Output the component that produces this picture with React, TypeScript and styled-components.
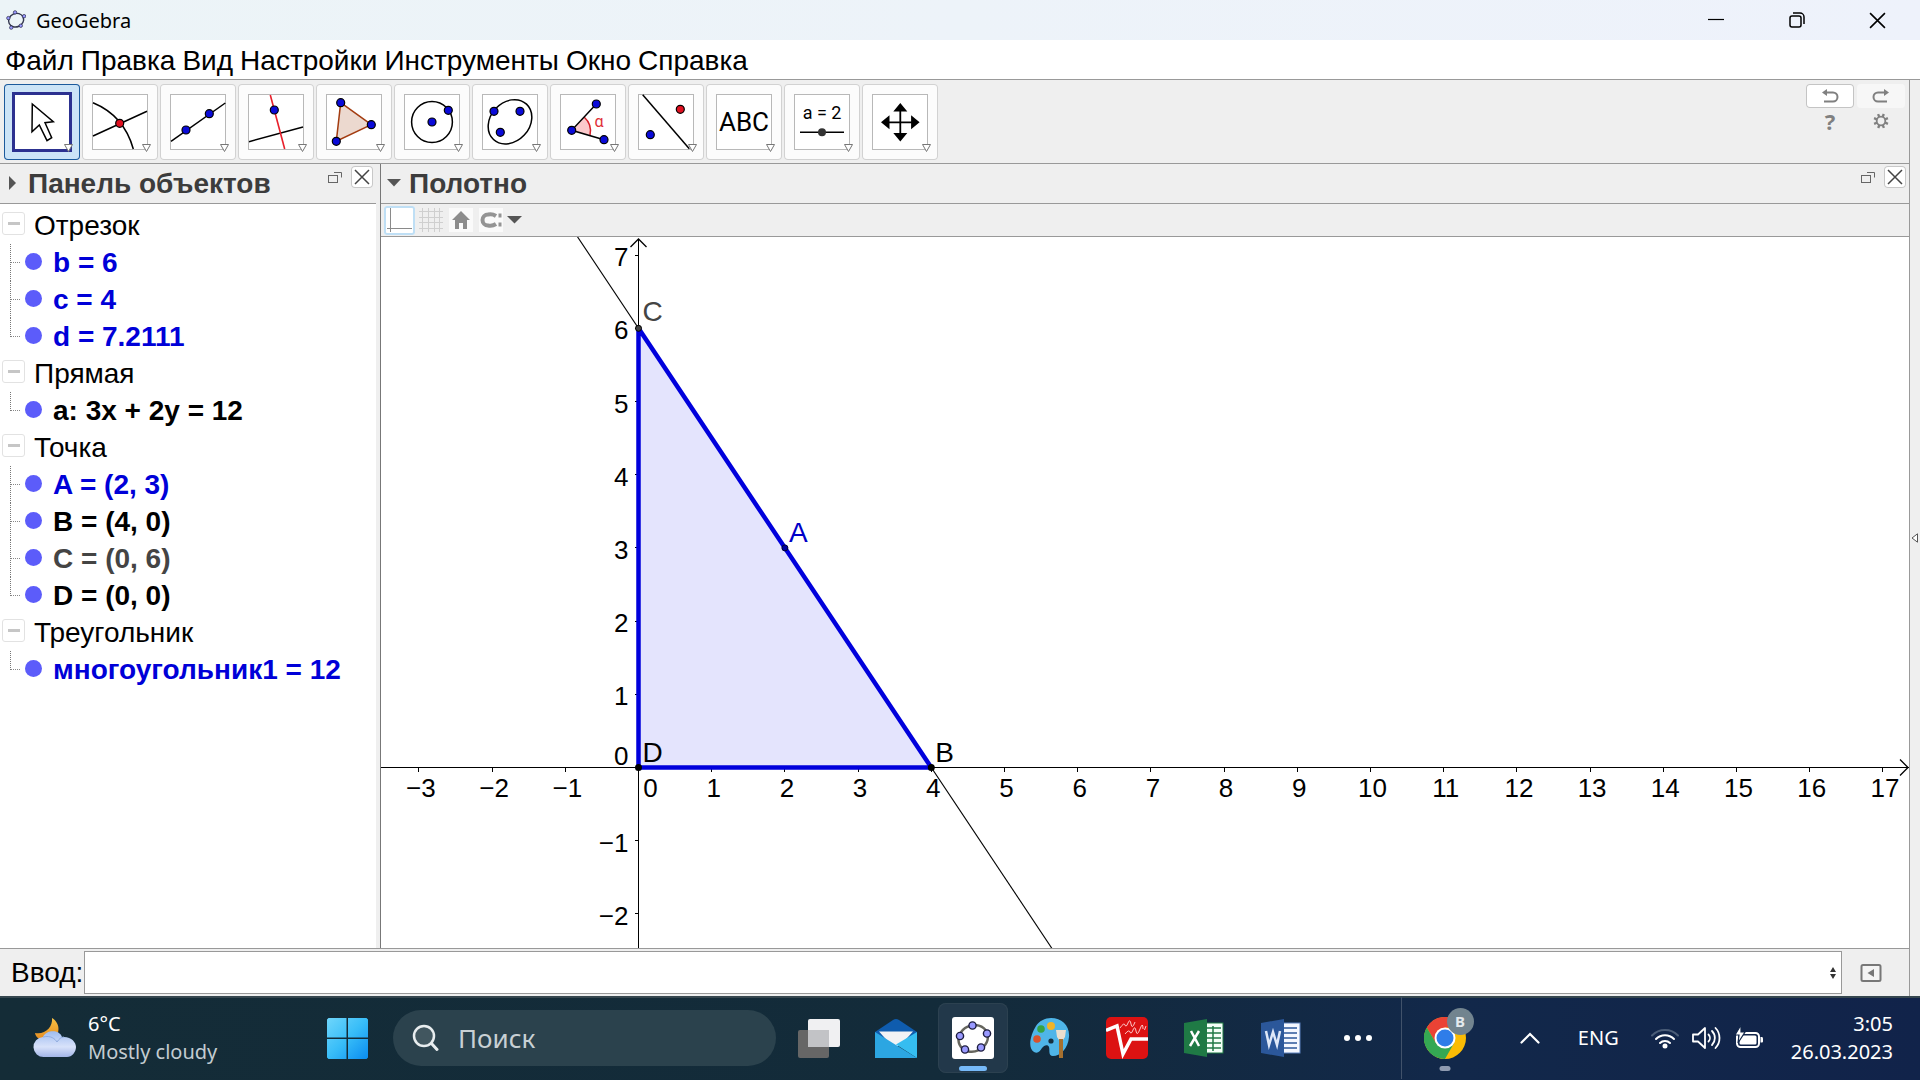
import React from "react";
import styled, { createGlobalStyle, css } from "styled-components";

const arial = `"Liberation Sans", Arial, sans-serif`;
const segoe = `"Noto Sans", "Open Sans", sans-serif`;

const GlobalStyle = createGlobalStyle`
  * { box-sizing: border-box; }
  body { margin: 0; background: #efefef; font-family: ${arial}; color: #000; }
  button { font: inherit; color: inherit; padding: 0; border: 0; background: none; }
  svg { display: block; }
`;

const Screen = styled.div`
  display: flex;
  flex-direction: column;
  height: 100vh;
  overflow: hidden;
`;

/* ---------- window chrome ---------- */

const TitleBar = styled.header`
  display: flex;
  align-items: center;
  flex: none;
  height: 40px;
  padding-left: 6px;
  background: linear-gradient(90deg, #ecf4f7, #eef2fb);
  font-family: ${segoe};
`;

const AppTitle = styled.h1`
  flex: 1;
  margin: 0 0 0 10px;
  padding-top: 2px;
  font-size: 20px;
  line-height: 24px;
  font-weight: 400;
`;

const WindowButton = styled.button`
  display: grid;
  place-items: center;
  width: 81px;
  height: 40px;
`;

const WindowButtons = styled.div`
  display: flex;
  padding-right: 2px;
`;

const MenuBar = styled.nav`
  display: flex;
  align-items: center;
  flex: none;
  gap: 7px;
  height: 40px;
  padding: 2px 0 0 5px;
  background: #fff;
  border-bottom: 1px solid #999;
  font-size: 28px;
  line-height: 32px;
`;

const Body = styled.div`
  display: flex;
  flex: 1;
  min-height: 0;
`;

const Main = styled.main`
  display: flex;
  flex-direction: column;
  flex: 1;
  min-width: 0;
  border-right: 1px solid #999;
`;

const SideStrip = styled.button`
  display: flex;
  align-items: center;
  justify-content: flex-end;
  width: 10px;
  background: #efefef;
  padding-right: 2px;
`;

/* ---------- toolbar ---------- */

const Toolbar = styled.div`
  display: flex;
  justify-content: space-between;
  flex: none;
  height: 84px;
  padding: 4px 4px 0;
  border-bottom: 1px solid #999;
`;

const ToolRow = styled.div`
  display: flex;
  gap: 2px;
`;

const ToolButton = styled.button<{ $active?: boolean }>`
  width: 76px;
  height: 76px;
  border-radius: 4px;
  background: #fcfcfc;
  box-shadow: inset 0 0 0 1px #d2d2d2;
  ${(p) =>
    p.$active &&
    css`
      background: #cce4f7;
      box-shadow: inset 0 0 0 1px #1c5a9c;
    `}
`;

const ActionGrid = styled.div`
  display: grid;
  grid-template-columns: 48px 48px;
  grid-template-rows: 24px 26px;
  gap: 0 3px;
`;

const ActionButton = styled.button<{ $look?: "raised" | "faint" }>`
  display: grid;
  place-items: center;
  border-radius: 4px;
  color: #808080;
  ${(p) => p.$look === "raised" && css`background: #fff; box-shadow: inset 0 0 0 1px #c4c4c4;`}
  ${(p) => p.$look === "faint" && css`background: #f7f7f7;`}
`;

const HelpMark = styled.span`
  font-size: 22px;
  line-height: 24px;
  font-weight: 700;
  font-family: ${segoe};
`;

/* ---------- panels ---------- */

const Panels = styled.div`
  display: flex;
  flex: 1;
  min-height: 0;
  border-bottom: 1px solid #999;
`;

const ObjectsPanel = styled.section`
  display: flex;
  flex-direction: column;
  flex: none;
  width: 381px;
  border-right: 1px solid #777;
  padding-right: 4px;
`;

const GraphPanel = styled.section`
  display: flex;
  flex-direction: column;
  flex: 1;
  min-width: 0;
`;

const PanelHeader = styled.div`
  display: flex;
  flex: none;
  height: 40px;
  padding: 0 3px 0 6px;
  border-bottom: 1px solid #999;
`;

const PanelToggle = styled.button`
  display: grid;
  place-items: center;
  width: 14px;
  height: 38px;
`;

const PanelTitle = styled.h2`
  flex: 1;
  margin: 0 0 0 8px;
  font-size: 28px;
  line-height: 40px;
  font-weight: 700;
  color: #3c3c3c;
  white-space: nowrap;
`;

const PanelButton = styled.button<{ $boxed?: boolean }>`
  display: grid;
  place-items: center;
  width: 22px;
  height: 22px;
  margin: 2px 0 0 5px;
  border-radius: 4px;
  ${(p) => p.$boxed && css`background: #fff; box-shadow: inset 0 0 0 1px #c8c8c8;`}
`;

const Tree = styled.div`
  flex: 1;
  padding-top: 3px;
  background: #fff;
  font-size: 28px;
  line-height: 38px;
  overflow: hidden;
`;

const GroupHeader = styled.div`
  display: flex;
  align-items: center;
  gap: 9px;
  height: 37px;
  padding-left: 2px;
`;

const CollapseButton = styled.button`
  display: grid;
  place-items: center;
  width: 23px;
  height: 23px;
  margin-bottom: 4px;
  border: 1px solid #e2e2e2;
  border-radius: 3px;
  &::before {
    content: "";
    width: 12px;
    height: 3px;
    background: #c6c6c6;
  }
`;

const ObjectList = styled.ul`
  margin: 0;
  padding: 0;
  list-style: none;
`;

const ObjectRow = styled.li<{ $color: string }>`
  display: flex;
  align-items: center;
  height: 37px;
  padding-left: 10px;
  font-weight: 700;
  color: ${(p) => p.$color};
  white-space: nowrap;
`;

const Branch = styled.span`
  align-self: stretch;
  width: 11px;
  border-left: 1px dotted #777;
  background: repeating-linear-gradient(90deg, #888 0 1px, transparent 1px 2px) 0 18px / 100% 1px no-repeat;
  ${ObjectRow}:last-child & {
    height: 19px;
  }
`;

const Marble = styled.button`
  width: 17px;
  height: 17px;
  margin: 0 11px 2px 4px;
  border-radius: 50%;
  background: #5c5cfa;
`;

const StyleBar = styled.div`
  display: flex;
  align-items: center;
  flex: none;
  gap: 2px;
  height: 33px;
  padding-left: 3px;
  border-bottom: 1px solid #999;
`;

const StyleButton = styled.button<{ $active?: boolean }>`
  display: grid;
  place-items: center;
  width: ${(p) => (p.$active ? 31 : 28)}px;
  height: 29px;
  border-radius: 3px;
  ${(p) => p.$active && css`background: #fff; box-shadow: inset 0 0 0 2px #bfdff5;`}
`;

const Canvas = styled.svg`
  flex: 1;
  width: 100%;
  min-height: 0;
  background: #fff;
  font-family: ${arial};
  font-size: 26px;
`;

/* ---------- input line ---------- */

const InputBar = styled.form`
  display: flex;
  flex: none;
  align-items: stretch;
  height: 47px;
  padding: 2px 10px 2px 11px;
`;

const InputLabel = styled.label`
  width: 73px;
  font-size: 28px;
  line-height: 44px;
  white-space: nowrap;
`;

const InputBox = styled.div`
  display: flex;
  flex: 1;
  border: 1px solid #999;
  background: #fff;
`;

const Command = styled.input`
  flex: 1;
  border: 0;
  outline: 0;
  padding: 0 4px;
  font: 28px/32px ${arial};
  background: transparent;
`;

const IconButton = styled.button<{ $width: number }>`
  display: grid;
  place-items: center;
  width: ${(p) => p.$width}px;
`;

/* ---------- taskbar ---------- */

const Taskbar = styled.footer`
  display: flex;
  flex: none;
  align-items: center;
  height: 84px;
  padding-bottom: 2px;
  border-top: 2px solid #36474f;
  background: linear-gradient(90deg, #142c37 0%, #132b3a 50%, #12284a 76%, #11234a 100%);
  font-family: ${segoe};
  font-size: 20px;
  line-height: 28px;
  color: #fff;
`;

const Weather = styled.button`
  display: flex;
  align-items: center;
  gap: 11px;
  width: 309px;
  padding-left: 33px;
  text-align: left;
`;

const Dim = styled.span`
  display: block;
  color: #c3ccd1;
`;

const TaskButton = styled.button`
  display: grid;
  place-items: center;
  flex: none;
  width: 77px;
  height: 80px;
`;

const ActiveTask = styled.span`
  display: grid;
  place-items: center;
  position: relative;
  width: 70px;
  height: 70px;
  border-radius: 8px;
  background: #22384a;
  box-shadow: inset 0 0 0 1px #2c4150;
`;

const Indicator = styled.span<{ $active?: boolean }>`
  position: absolute;
  left: 50%;
  bottom: ${(p) => (p.$active ? 2 : -12)}px;
  width: ${(p) => (p.$active ? 28 : 11)}px;
  height: 5px;
  border-radius: 3px;
  transform: translateX(-50%);
  background: ${(p) => (p.$active ? "#76b9f8" : "#8f9bb0")};
`;

const IconWrap = styled.span`
  position: relative;
`;

const Badge = styled.span`
  position: absolute;
  left: 23px;
  top: -9px;
  width: 27px;
  height: 27px;
  border-radius: 50%;
  background: #72848f;
  color: #e4eaee;
  font-size: 15px;
  line-height: 27px;
  font-weight: 700;
  text-align: center;
`;

const SearchBox = styled.label`
  display: flex;
  align-items: center;
  gap: 17px;
  flex: none;
  width: 383px;
  height: 56px;
  margin: 0 4px 0 7px;
  padding-left: 18px;
  border-radius: 28px;
  background: #2b424d;
`;

const SearchInput = styled.input`
  flex: 1;
  min-width: 0;
  border: 0;
  outline: 0;
  background: transparent;
  color: #fff;
  font: 26px/36px ${segoe};
  &::placeholder {
    color: #c8d0d4;
    opacity: 1;
  }
`;

const Divider = styled.span`
  width: 1px;
  height: 82px;
  margin: 0 4px 0 5px;
  background: #41526a;
`;

const Tray = styled.div`
  display: flex;
  align-items: center;
  justify-content: flex-end;
  flex: 1;
  padding-right: 27px;
`;

const Language = styled.button`
  margin: 0 32px 0 38px;
`;

const TrayStatus = styled.button`
  display: flex;
  align-items: center;
  gap: 13px;
  margin-right: 27px;
`;

const Clock = styled.button`
  text-align: right;
`;

/* ---------- drawings ---------- */

type Pt = [number, number];

const Dot = ({ at: [x, y], red }: { at: Pt; red?: boolean }) => (
  <circle cx={x} cy={y} r="4" fill={red ? "#e01020" : "#0a0ad8"} stroke="#000" strokeWidth="1.2" />
);

const frame = <rect x="10.5" y="10.5" width="55" height="55" fill="#fff" stroke="#b8b8b8" />;
const more = <path d="M60.5 60.5h8l-4 7z" fill="#fff" stroke="#777" />;

const tools: { name: string; art: React.ReactNode; active?: boolean }[] = [
  {
    name: "Перемещать",
    active: true,
    art: (
      <>
        <rect x="9.5" y="9.5" width="57" height="57" fill="#fff" stroke="#2c3190" strokeWidth="3" />
        <path d="M28.3 20 49.3 37.7 41 38.7 47.7 53.7 43 56.7 35.3 41 28 47.7z" fill="#fff" stroke="#000" strokeWidth="1.5" />
      </>
    ),
  },
  {
    name: "Точка",
    art: (
      <>
        {frame}
        <path d="M11 18.7C31 27 45 42 51.3 65M11 52 65 27.3" fill="none" stroke="#000" strokeWidth="1.5" />
        <Dot at={[37.7, 39.3]} red />
      </>
    ),
  },
  {
    name: "Прямая",
    art: (
      <>
        {frame}
        <path d="M11 57.3 65.3 19" stroke="#000" strokeWidth="1.5" />
        <Dot at={[26, 46]} />
        <Dot at={[49.3, 29.7]} />
      </>
    ),
  },
  {
    name: "Перпендикулярная прямая",
    art: (
      <>
        {frame}
        <path d="M11 57.7 65 43" stroke="#000" strokeWidth="1.5" />
        <path d="M32.3 11 46.7 65" stroke="#e8202c" strokeWidth="1.6" />
        <Dot at={[36.3, 26]} />
      </>
    ),
  },
  {
    name: "Многоугольник",
    art: (
      <>
        {frame}
        <path d="M24.7 18.7 55.3 40.7 20.3 57.3z" fill="#ecd9cf" stroke="#a33c10" strokeWidth="1.5" />
        <Dot at={[24.7, 18.7]} />
        <Dot at={[55.3, 40.7]} />
        <Dot at={[20.3, 57.3]} />
      </>
    ),
  },
  {
    name: "Окружность",
    art: (
      <>
        {frame}
        <circle cx="38" cy="38" r="20.4" fill="none" stroke="#000" strokeWidth="1.5" />
        <Dot at={[38, 38]} />
        <Dot at={[54.3, 26.3]} />
      </>
    ),
  },
  {
    name: "Эллипс",
    art: (
      <>
        {frame}
        <ellipse cx="38" cy="37.8" rx="24.2" ry="19.5" transform="rotate(-47 38 37.8)" fill="none" stroke="#000" strokeWidth="1.5" />
        <Dot at={[22, 27.3]} />
        <Dot at={[48, 27.3]} />
        <Dot at={[28.3, 48.3]} />
      </>
    ),
  },
  {
    name: "Угол",
    art: (
      <>
        {frame}
        <path d="M21.7 46.3 34.3 33.3A18.5 18.5 0 0 1 40 51z" fill="#fbc9cb" />
        <path d="M34.3 33.3A18.5 18.5 0 0 1 40 51" fill="none" stroke="#d6202a" strokeWidth="1.5" />
        <path d="M46.3 20 21.7 46.3 54 55.7" fill="none" stroke="#000" strokeWidth="1.5" />
        <Dot at={[21.7, 46.3]} />
        <Dot at={[46.3, 20]} />
        <Dot at={[54, 55.7]} />
        <text x="49" y="43" textAnchor="middle" fontSize="16" fontFamily="Roboto, sans-serif" fill="#e03038">α</text>
      </>
    ),
  },
  {
    name: "Отражение",
    art: (
      <>
        {frame}
        <path d="M14.7 10.7 61.3 64.7" stroke="#000" strokeWidth="1.5" />
        <Dot at={[52.3, 25.3]} red />
        <Dot at={[22.3, 50.7]} />
      </>
    ),
  },
  {
    name: "Текст",
    art: (
      <>
        {frame}
        <text x="38" y="47" textAnchor="middle" fontSize="26" fontFamily="Roboto, sans-serif">ABC</text>
      </>
    ),
  },
  {
    name: "Ползунок",
    art: (
      <>
        {frame}
        <text x="38" y="35" textAnchor="middle" fontSize="18" fontFamily="Roboto, sans-serif">a = 2</text>
        <path d="M16 48.3H60" stroke="#000" strokeWidth="1.5" />
        <circle cx="38" cy="48.3" r="4" fill="#333" />
      </>
    ),
  },
  {
    name: "Переместить чертёж",
    art: (
      <>
        {frame}
        <path d="M38.3 24v29M24 38.3h29" stroke="#000" strokeWidth="1.8" />
        <path d="M38.3 19l7 8.500h-14zM38.300 57.600l7-8.500h-14zM19 38.300l8.500-7v14zM57.600 38.300l-8.500-7v14z" />
      </>
    ),
  },
];

const GeoLogo = ({ size, small }: { size: number; small?: boolean }) => (
  <svg width={size} height={size} viewBox="0 0 42 42" aria-hidden="true">
    {!small && <rect width="42" height="42" rx="3" fill="#fff" />}
    <ellipse cx="21" cy="21.5" rx={small ? 16 : 15} ry={small ? 14 : 13} transform="rotate(-25 21 21)" fill="none" stroke={small ? "#34384f" : "#66665e"} strokeWidth={small ? 3 : 2.5} />
    {(small
      ? [[19, 5], [38, 13], [31, 33], [11, 37], [5, 17]]
      : [[20.5, 8.5], [35, 16.5], [29, 30.5], [13, 32.5], [8, 19]]
    ).map(([x, y]) => (
      <circle key={x} cx={x} cy={y} r="3.6" fill="#9a9aff" stroke="#1c1c40" strokeWidth="1.4" />
    ))}
  </svg>
);

const Undock = () => (
  <svg width="14" height="11" viewBox="0 0 14 11" fill="none" stroke="#666" aria-hidden="true">
    <rect x=".5" y="3.5" width="9" height="7" />
    <path d="M6 .5h7.500v5" />
  </svg>
);

const Cross = ({ size, color }: { size: number; color: string }) => (
  <svg width={size} height={size} viewBox="0 0 16 16" stroke={color} strokeWidth="1.5" aria-hidden="true">
    <path d="M1 1l14 14M15 1 1 15" />
  </svg>
);

/* ---------- algebra data ---------- */

const BLUE = "#0000d8";
const groups: { name: string; items: [string, string][] }[] = [
  { name: "Отрезок", items: [["b = 6", BLUE], ["c = 4", BLUE], ["d = 7.2111", BLUE]] },
  { name: "Прямая", items: [["a: 3x + 2y = 12", "#000"]] },
  { name: "Точка", items: [["A = (2, 3)", BLUE], ["B = (4, 0)", "#000"], ["C = (0, 6)", "#444"], ["D = (0, 0)", "#000"]] },
  { name: "Треугольник", items: [["многоугольник1 = 12", BLUE]] },
];

/* ---------- graph ---------- */

const UNIT = 73.2;
const px = (x: number) => 257.5 + x * UNIT;
const py = (y: number) => 530.5 - y * UNIT;
const label = (n: number) => (n < 0 ? `−${-n}` : `${n}`);
const range = (from: number, to: number) => Array.from({ length: to - from + 1 }, (_, i) => from + i);

const Graph = () => (
  <Canvas role="img" aria-label="Полотно">
    <path d={`M${px(0)} ${py(6)}V${py(0)}H${px(4)}z`} fill="#e4e4fd" />
    <path d={`M0 ${py(0)}H4000M${px(0)} 2V4000`} stroke="#000" shapeRendering="crispEdges" />
    <path d={`M${px(0) - 8} 10l8-8 8 8`} fill="none" stroke="#000" strokeWidth="1.3" />
    <svg x="100%" overflow="visible">
      <path d={`M-9 ${py(0) - 8}l8 8-8 8`} fill="none" stroke="#000" strokeWidth="1.3" />
    </svg>
    {range(-3, 17).map((n) => (
      <g key={n}>
        {n !== 0 && <path d={`M${px(n)} ${py(0)}v4`} stroke="#000" shapeRendering="crispEdges" />}
        <text x={n === 0 ? px(0) + 12 : px(n) + 2} y={py(0) + 29} textAnchor="middle">
          {label(n)}
        </text>
      </g>
    ))}
    {range(-2, 7).map((n) => (
      <g key={n}>
        {n !== 0 && <path d={`M${px(0)} ${py(n)}h-4`} stroke="#000" shapeRendering="crispEdges" />}
        <text x={px(0) - 10} y={n === 0 ? py(0) - 3 : py(n) + 11} textAnchor="end">
          {label(n)}
        </text>
      </g>
    ))}
    <path d={`M${px(-2)} ${py(9)}L${px(16)} ${py(-18)}`} stroke="#000" strokeWidth="1.1" />
    <path d={`M${px(0)} ${py(6)}V${py(0)}H${px(4)}z`} fill="none" stroke="#0000dc" strokeWidth="4.5" strokeLinejoin="round" />
    <circle cx={px(0)} cy={py(6)} r="3" fill="#444" stroke="#000" />
    <circle cx={px(2)} cy={py(3)} r="3" fill="#0000a0" stroke="#000030" />
    <circle cx={px(4)} cy={py(0)} r="3.5" />
    <circle cx={px(0)} cy={py(0)} r="3.5" />
    <text x={px(0) + 4} y={py(6) - 7} fontSize="28" fill="#444">C</text>
    <text x={px(2) + 4} y={py(3) - 6} fontSize="28" fill="#0000c8">A</text>
    <text x={px(4) + 4} y={py(0) - 6} fontSize="28">B</text>
    <text x={px(0) + 4} y={py(0) - 6} fontSize="28">D</text>
  </Canvas>
);

/* ---------- page ---------- */

export default function App() {
  return (
    <Screen>
      <GlobalStyle />
      <TitleBar>
        <GeoLogo size={20} small />
        <AppTitle>GeoGebra</AppTitle>
        <WindowButtons>
          <WindowButton aria-label="Свернуть">
            <svg width="16" height="16" stroke="#000" strokeWidth="1.2"><path d="M0 7.5h16" /></svg>
          </WindowButton>
          <WindowButton aria-label="Восстановить">
            <svg width="16" height="16" fill="none" stroke="#000" strokeWidth="1.5">
              <rect x="1" y="4" width="11" height="11" rx="2" />
              <path d="M4 1h7a4 4 0 0 1 4 4v7" />
            </svg>
          </WindowButton>
          <WindowButton aria-label="Закрыть"><Cross size={17} color="#000" /></WindowButton>
        </WindowButtons>
      </TitleBar>
      <MenuBar>
        {["Файл", "Правка", "Вид", "Настройки", "Инструменты", "Окно", "Справка"].map((m) => (
          <button key={m}>{m}</button>
        ))}
      </MenuBar>
      <Body>
        <Main>
          <Toolbar>
            <ToolRow>
              {tools.map((t) => (
                <ToolButton key={t.name} $active={t.active} aria-label={t.name}>
                  <svg width="76" height="76" viewBox="0 0 76 76" fill="#000">
                    {t.art}
                    {more}
                  </svg>
                </ToolButton>
              ))}
            </ToolRow>
            <ActionGrid>
              <ActionButton $look="raised" aria-label="Отменить">
                <svg width="18" height="14" fill="none" stroke="currentColor" strokeWidth="2">
                  <path d="M4 3.5h8a4.500 4.500 0 0 1 0 9H3" />
                  <path d="M6 0v7L1 3.500z" fill="currentColor" stroke="none" />
                </svg>
              </ActionButton>
              <ActionButton $look="faint" aria-label="Повторить">
                <svg width="18" height="14" fill="none" stroke="currentColor" strokeWidth="2">
                  <path d="M14 3.500H6a4.500 4.500 0 0 0 0 9h9" />
                  <path d="M12 0v7l5-3.500z" fill="currentColor" stroke="none" />
                </svg>
              </ActionButton>
              <ActionButton aria-label="Помощь"><HelpMark>?</HelpMark></ActionButton>
              <ActionButton aria-label="Параметры">
                <svg width="16" height="16" viewBox="0 0 16 16" fill="none" stroke="currentColor">
                  <circle cx="8" cy="8" r="4.3" strokeWidth="1.8" />
                  <g strokeWidth="2.4">
                    {[22, 67, 112, 157, 202, 247, 292, 337].map((a) => (
                      <path key={a} d="M8 .5v3" transform={`rotate(${a} 8 8)`} />
                    ))}
                  </g>
                </svg>
              </ActionButton>
            </ActionGrid>
          </Toolbar>
          <Panels>
            <ObjectsPanel>
              <PanelHeader>
                <PanelToggle aria-label="Показать панель стилей">
                  <svg width="8" height="14" fill="#555"><path d="M0 0l7 7-7 7z" /></svg>
                </PanelToggle>
                <PanelTitle>Панель объектов</PanelTitle>
                <PanelButton aria-label="Открепить"><Undock /></PanelButton>
                <PanelButton $boxed aria-label="Закрыть панель"><Cross size={16} color="#444" /></PanelButton>
              </PanelHeader>
              <Tree>
                {groups.map((g) => (
                  <React.Fragment key={g.name}>
                    <GroupHeader>
                      <CollapseButton aria-label={g.name} />
                      {g.name}
                    </GroupHeader>
                    <ObjectList>
                      {g.items.map(([text, color]) => (
                        <ObjectRow key={text} $color={color}>
                          <Branch />
                          <Marble aria-label={text} />
                          {text}
                        </ObjectRow>
                      ))}
                    </ObjectList>
                  </React.Fragment>
                ))}
              </Tree>
            </ObjectsPanel>
            <GraphPanel>
              <PanelHeader>
                <PanelToggle aria-label="Скрыть панель стилей">
                  <svg width="14" height="8" fill="#555"><path d="M0 0h14L7 7.500z" /></svg>
                </PanelToggle>
                <PanelTitle>Полотно</PanelTitle>
                <PanelButton aria-label="Открепить"><Undock /></PanelButton>
                <PanelButton $boxed aria-label="Закрыть полотно"><Cross size={16} color="#444" /></PanelButton>
              </PanelHeader>
              <StyleBar>
                <StyleButton $active aria-label="Оси">
                  <svg width="25" height="24" stroke="#8a8a8a"><path d="M3.500 0v24M0 20.500h25" /></svg>
                </StyleButton>
                <StyleButton aria-label="Сетка">
                  <svg width="24" height="24" stroke="#cfcfcf">
                    <path d="M3.500 0v24M9.500 0v24M15.500 0v24M20.500 0v24M0 3.500h24M0 9.500h24M0 14.500h24M0 20.500h24" />
                  </svg>
                </StyleButton>
                <StyleButton aria-label="Стандартный вид">
                  <svg width="24" height="24">
                    <rect width="24" height="24" fill="#fafafa" />
                    <path d="M12 3 21 12h-3v9h-4v-6h-4v6H6v-9H3z" fill="#8c8c8c" />
                  </svg>
                </StyleButton>
                <StyleButton aria-label="Привязка">
                  <svg width="24" height="24">
                    <rect width="24" height="24" fill="#fafafa" />
                    <path d="M17 8C14 6 11 6 9 6.500a5.500 5.500 0 0 0 0 11c2 .5 5 .5 8-1.500" fill="none" stroke="#949494" strokeWidth="4" />
                    <path d="M21 5.500v4M21 14.500v4" stroke="#949494" strokeWidth="3" />
                  </svg>
                </StyleButton>
                <svg width="15" height="8" fill="#555" aria-hidden="true"><path d="M0 0h15L7.500 7.500z" /></svg>
              </StyleBar>
              <Graph />
            </GraphPanel>
          </Panels>
          <InputBar onSubmit={(e) => e.preventDefault()}>
            <InputLabel htmlFor="command">Ввод:</InputLabel>
            <InputBox>
              <Command id="command" />
              <IconButton type="button" $width={17} aria-label="История ввода">
                <svg width="6" height="12" fill="#333"><path d="M3 0l3 5H0zM3 12l3-5H0z" /></svg>
              </IconButton>
            </InputBox>
            <IconButton type="button" $width={57} aria-label="Справка по командам">
              <svg width="22" height="18" viewBox="0 0 22 18">
                <rect x="1.5" y="1" width="19" height="16" rx="1.5" fill="#f4f4f4" stroke="#777" strokeWidth="2" />
                <path d="M14 5v8L7.500 9z" fill="#777" />
              </svg>
            </IconButton>
          </InputBar>
        </Main>
        <SideStrip aria-label="Показать боковую панель">
          <svg width="7" height="10" fill="#fff" stroke="#555"><path d="M6.500 .8v8.400L1 5z" /></svg>
        </SideStrip>
      </Body>
      <Taskbar>
        <Weather>
          <svg width="44" height="42" viewBox="0 0 44 42">
            <defs>
              <linearGradient id="cloud" x2="0" y2="1"><stop stopColor="#9fbdf0" /><stop offset=".6" stopColor="#d8e2fa" /><stop offset="1" stopColor="#a3b6e8" /></linearGradient>
              <linearGradient id="moon" x2="0" y2="1"><stop stopColor="#f6c044" /><stop offset="1" stopColor="#e58a1e" /></linearGradient>
            </defs>
            <path d="M19 1c9 5 9 19-2 22C10 25 3 22 2 16 12 18 20 10 19 1z" fill="url(#moon)" />
            <path d="M11 40a10 10 0 0 1-1-20C13 13 26 12 29 20c9-1 14 5 14 10s-4 10-9 10z" fill="url(#cloud)" />
            <path d="M10 20c8-2 12 2 14 5 2-3 4-5 7-5" fill="none" stroke="#90acdf" />
          </svg>
          <span>6°C<Dim>Mostly cloudy</Dim></span>
        </Weather>
        <TaskButton aria-label="Пуск">
          <svg width="41" height="41" viewBox="0 0 41 41">
            <defs>
              <linearGradient id="win" x2="1" y2="1"><stop stopColor="#6fd6fb" /><stop offset=".5" stopColor="#38bdf8" /><stop offset="1" stopColor="#0a8cf0" /></linearGradient>
            </defs>
            <path d="M1.500 0H19.500V19.500H0V1.500zM21 0H39.500L41 1.500V19.500H21zM0 21H19.500V41H1.500L0 39.500zM21 21H41V39.500L39.500 41H21z" fill="url(#win)" />
          </svg>
        </TaskButton>
        <SearchBox>
          <svg width="28" height="28" fill="#41565f" stroke="#e8edef" strokeWidth="2.5" strokeLinecap="round">
            <circle cx="13" cy="12" r="10" />
            <path d="M20.500 19.500 26 25.500" strokeWidth="3" />
          </svg>
          <SearchInput placeholder="Поиск" aria-label="Поиск" />
        </SearchBox>
        <TaskButton aria-label="Представление задач">
          <svg width="42" height="40">
            <rect y="12" width="31" height="28" rx="2" fill="#666" />
            <rect x="10" y="1" width="32" height="28" rx="2" fill="#f0f0f2" />
            <rect x="10" y="12" width="21" height="17" fill="#c2c3c6" />
          </svg>
        </TaskButton>
        <TaskButton aria-label="Почта">
          <svg width="42" height="40" viewBox="0 0 42 40">
            <path d="M0 14 18 2q3-2 6 0l18 12v10H0z" fill="#0f5cae" />
            <path d="M4 13.500h34L25 28H17z" fill="#f2f3f5" />
            <path d="M42 14v26L21 26.500z" fill="#35bdf0" />
            <path d="M0 14 42 40H0z" fill="#2ca6e2" />
          </svg>
        </TaskButton>
        <TaskButton aria-label="GeoGebra">
          <ActiveTask>
            <GeoLogo size={42} />
            <Indicator $active />
          </ActiveTask>
        </TaskButton>
        <TaskButton aria-label="Paint">
          <svg width="42" height="42" viewBox="0 0 42 42">
            <path d="M22 1c11 0 19 8 18 19-1 12-9 19-16 19-5 0-3-6-4-9s-5-2-7 1-4 6-8 4C-2 31 2 17 7 9c3-5 9-8 15-8z" fill="#4fb5e8" />
            <circle cx="22" cy="9" r="4" fill="#f0b429" />
            <circle cx="12" cy="12" r="3.8" fill="#35a344" />
            <circle cx="8" cy="22" r="3.8" fill="#d9532c" />
            <circle cx="22" cy="24" r="2.6" fill="#163040" />
            <path d="M27 13h10l-1 7-2 3h-4l-2-3z" fill="#eadfce" />
            <path d="M30 22h4v19h-4z" fill="#a5702f" />
          </svg>
        </TaskButton>
        <TaskButton aria-label="Читалка">
          <svg width="42" height="42" viewBox="0 0 42 42" fill="none">
            <rect width="42" height="42" rx="5" fill="#dc1212" />
            <path d="M0 13.500 11 9l6 28 8-15h17" stroke="#fff" strokeWidth="3.5" />
            <path d="M14 11q4-6 5-3t3-2 3 1 4-2M19 17q4-5 5-2t3-2 3 1 4-2 3 0M40 9l-1.500 4" stroke="#ffd8d8" strokeWidth=".9" />
          </svg>
        </TaskButton>
        <TaskButton aria-label="Excel">
          <svg width="40" height="38" viewBox="0 0 40 38">
            <rect x="20" y="4" width="19" height="30" fill="#f4fff8" stroke="#1f7a45" />
            <path d="M23 9h14M23 14h14M23 19h14M23 24h14M23 29h14M29 7v25" stroke="#1f7a45" strokeWidth="1.5" />
            <path d="M0 4 23 0v38L0 34z" fill="#1f7a45" />
            <path d="M7 12l8 15M15 12 6 27" stroke="#fff" strokeWidth="2.5" />
          </svg>
        </TaskButton>
        <TaskButton aria-label="Word">
          <svg width="40" height="38" viewBox="0 0 40 38">
            <rect x="20" y="4" width="19" height="30" fill="#f4f7ff" stroke="#5a80bd" />
            <path d="M23 9h13M23 14h13M23 19h13M23 24h13M23 29h13" stroke="#2b579a" strokeWidth="1.5" />
            <path d="M0 4 23 0v38L0 34z" fill="#2b579a" />
            <path d="M5 12l3 14 4-13 4 13 3-14" fill="none" stroke="#dfe8f8" strokeWidth="2.5" />
          </svg>
        </TaskButton>
        <TaskButton aria-label="Ещё">
          <svg width="28" height="6" fill="#fff"><circle cx="3" cy="3" r="3" /><circle cx="14" cy="3" r="3" /><circle cx="25" cy="3" r="3" /></svg>
        </TaskButton>
        <Divider />
        <TaskButton aria-label="Chrome">
          <IconWrap>
            <svg width="42" height="42" viewBox="0 0 42 42">
              <circle cx="21" cy="21" r="21" fill="#fbbc04" />
              <path d="M2.800 10.500A21 21 0 0 1 39.200 10.500H21L12 26.200z" fill="#ea4335" />
              <path d="M2.800 10.500A21 21 0 0 0 21 42L30 26.200 12 26.200z" fill="#34a853" />
              <circle cx="21" cy="21" r="10.5" fill="#fff" />
              <circle cx="21" cy="21" r="8.5" fill="#2f7de9" />
            </svg>
            <Badge>B</Badge>
            <Indicator />
          </IconWrap>
        </TaskButton>
        <Tray>
          <button aria-label="Скрытые значки">
            <svg width="20" height="12" fill="none" stroke="#fff" strokeWidth="2.2" strokeLinecap="round"><path d="M1.500 10.500 10 2l8.500 8.500" /></svg>
          </button>
          <Language>ENG</Language>
          <TrayStatus aria-label="Сеть, звук, батарея">
            <svg width="28" height="22" fill="none" stroke="#fff" strokeWidth="2" strokeLinecap="round">
              <path d="M1 8.500a18 18 0 0 1 26 0" stroke="#4b5d78" />
              <path d="M5 12a12.500 12.500 0 0 1 18 0M9 16a7 7 0 0 1 10 0" />
              <circle cx="14" cy="19" r="1.5" fill="#fff" />
            </svg>
            <svg width="30" height="24" fill="none" stroke="#fff" strokeWidth="1.8" strokeLinecap="round" strokeLinejoin="round">
              <path d="M1 8.500h5l7-6.500v20l-7-6.500H1z" />
              <path d="M16.500 8.500a5 5 0 0 1 0 7M20 5a10 10 0 0 1 0 14M23.500 2a14.500 14.500 0 0 1 0 20" />
            </svg>
            <svg width="29" height="28" viewBox="0 -2 29 28">
              <rect x="2" y="7" width="22" height="14" rx="3.5" fill="none" stroke="#fff" strokeWidth="2" />
              <rect x="4.5" y="9.500" width="17" height="9" rx="1.5" fill="#fff" />
              <path d="M25.500 11h1.500q1 0 1 1.500v3q0 1-1 1h-1.500z" fill="#fff" />
              <path d="M6-1 0 9h4l-1 8 7-11H6z" fill="#fff" stroke="#12274a" strokeWidth="1.2" />
            </svg>
          </TrayStatus>
          <Clock>3:05<br />26.03.2023</Clock>
        </Tray>
      </Taskbar>
    </Screen>
  );
}
